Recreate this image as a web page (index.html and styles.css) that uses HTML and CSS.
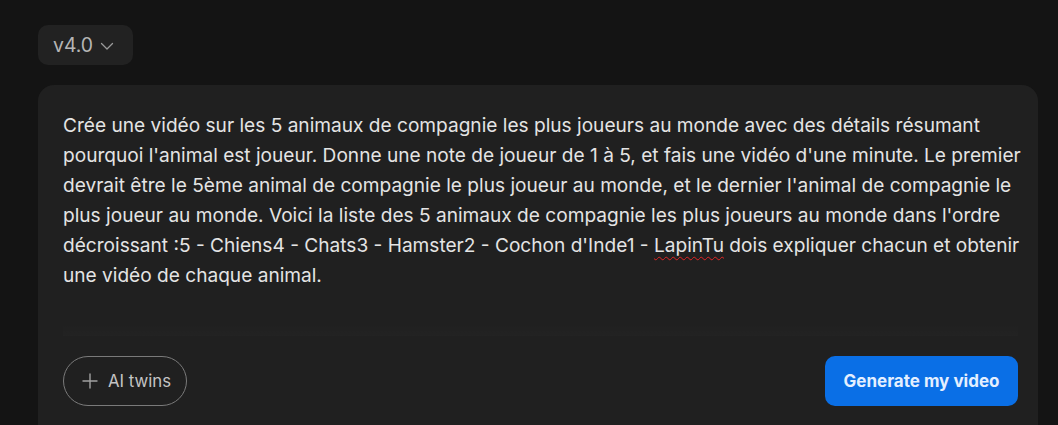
FILE: index.html
```html
<!DOCTYPE html>
<html lang="fr">
<head>
    <meta charset="UTF-8">
    <meta name="viewport" content="width=device-width, initial-scale=1.0">
    <title>Prompt</title>
    <link rel="stylesheet" href="styles.css">
</head>
<body>
    <div class="page">
        <!-- Version selector -->
        <button class="version">
            <span>v4.0</span>
            <svg width="16" height="16" viewBox="0 0 16 16" fill="none" stroke="currentColor" stroke-width="1.3" stroke-linecap="round" stroke-linejoin="round"><path d="M2.5 5.5 8 11l5.5-5.5"/></svg>
        </button>

        <!-- Prompt card -->
        <div class="card">
            <p class="prompt">Crée une vidéo sur les 5 animaux de compagnie les plus joueurs au monde avec des détails résumant pourquoi l'animal est joueur. Donne une note de joueur de 1 à 5, et fais une vidéo d'une minute. Le premier devrait être le 5ème animal de compagnie le plus joueur au monde, et le dernier l'animal de compagnie le plus joueur au monde. Voici la liste des 5 animaux de compagnie les plus joueurs au monde dans l'ordre décroissant :5 - Chiens4 - Chats3 - Hamster2 - Cochon d'Inde1 - <span class="typo">LapinTu</span> dois expliquer chacun et obtenir une vidéo de chaque animal.</p>
            <div class="fade"></div>
            <div class="actions">
                <button class="twins">
                    <svg width="18" height="18" viewBox="0 0 18 18" fill="none" stroke="currentColor" stroke-width="1.4" stroke-linecap="round"><path d="M9 2v14M2 9h14"/></svg>
                    <span>AI twins</span>
                </button>
                <button class="generate">Generate my video</button>
            </div>
        </div>
    </div>
</body>
</html>
```

FILE: styles.css
```css
* {
    box-sizing: border-box;
    margin: 0;
    padding: 0;
}
body {
    background-color: #141414;
    font-family: Inter, "Noto Sans", sans-serif;
    color: #e6e6e6;
    overflow: hidden;
}
.page {
    padding: 25px 20px 0 38px;
}
button {
    font-family: inherit;
    cursor: pointer;
}
.version {
    display: flex;
    align-items: center;
    gap: 6px;
    height: 40px;
    width: 95px;
    padding: 0 14px 0 15px;
    border: none;
    border-radius: 10px;
    background-color: #222222;
    color: #b5b5b5;
    font-size: 19.4px;
}
.version svg {
    color: #9a9a9a;
    margin-top: 1px;
}
.card {
    margin-top: 20px;
    width: 1000px;
    height: 360px;
    background-color: #202020;
    border-radius: 16px;
    padding: 25px 20px 0 25px;
}
.prompt {
    font-size: 19.1px;
    line-height: 30px;
    color: #e4e4e4;
    width: 958px;
    height: 214px;
}
.typo {
    text-decoration: underline wavy #e02424;
    text-decoration-thickness: 1.2px;
    text-underline-offset: 4px;
}
.fade {
    height: 12px;
    background: linear-gradient(to bottom, rgba(255, 255, 255, 0), rgba(255, 255, 255, 0.012));
}
.actions {
    display: flex;
    justify-content: space-between;
    align-items: center;
    margin-top: 20px;
}
.twins {
    display: flex;
    align-items: center;
    gap: 9px;
    height: 50px;
    width: 124px;
    padding: 0 0 0 17px;
    border: 1px solid #7a7a7a;
    border-radius: 25px;
    background: transparent;
    color: #c4c4c4;
    font-size: 16.8px;
}
.twins svg {
    color: #a0a0a0;
}
.generate {
    height: 50px;
    width: 193px;
    border: none;
    border-radius: 10px;
    background-color: #0a6fe6;
    color: #e4efff;
    font-size: 17px;
    font-weight: 700;
}
```
